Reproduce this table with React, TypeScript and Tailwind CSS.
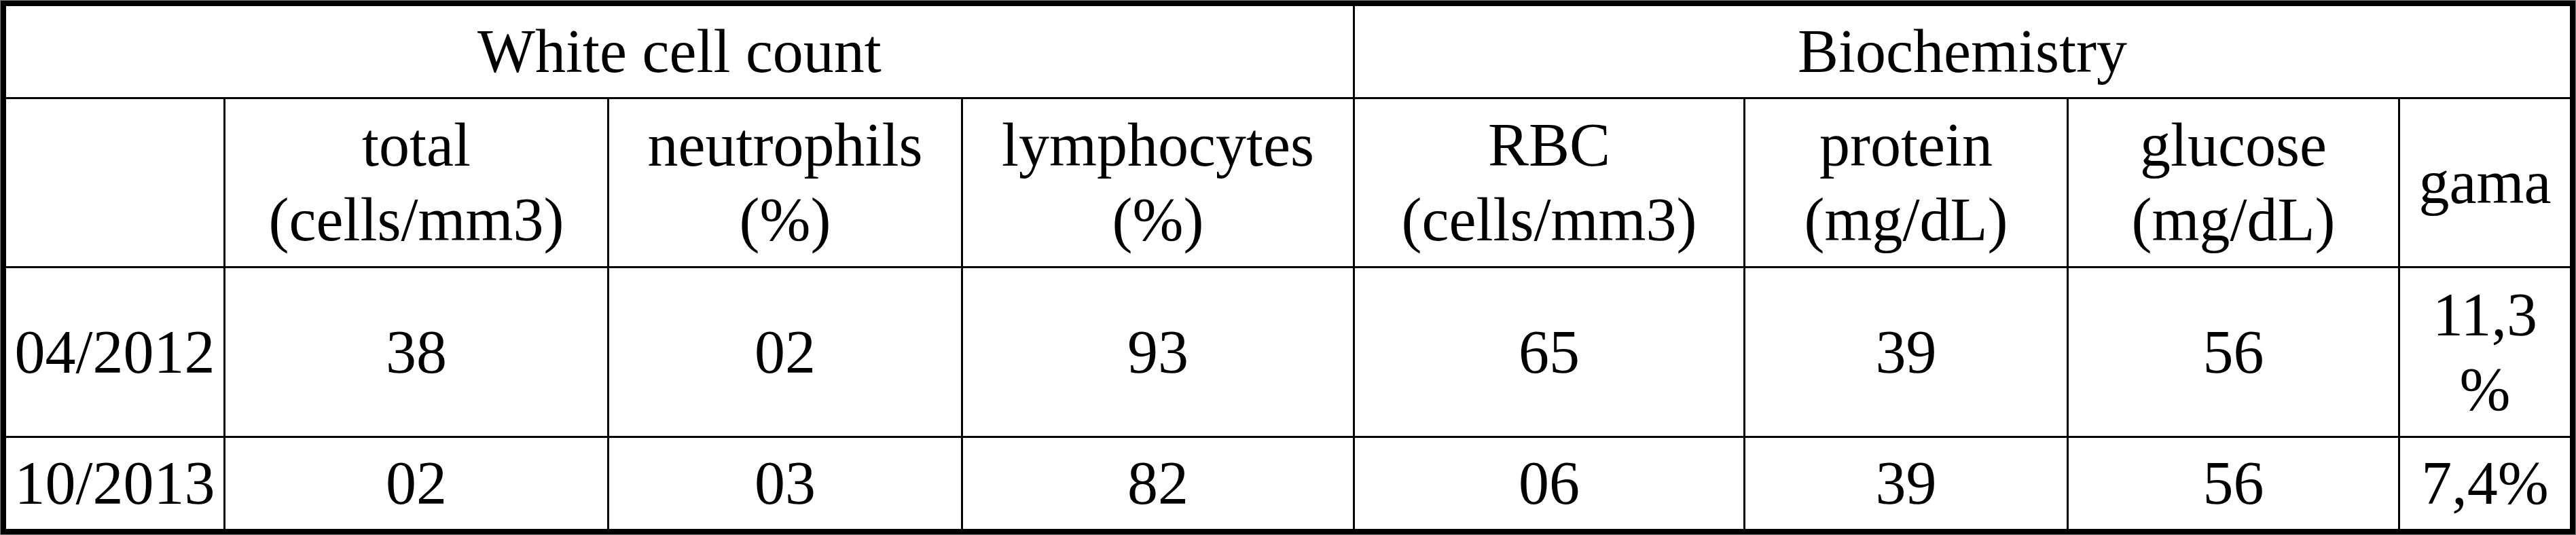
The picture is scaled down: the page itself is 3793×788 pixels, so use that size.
const cell = "flex items-center justify-center bg-white text-center";

const App = () => {
  return (
    <div className="h-[788px] w-[3793px] border border-[#7f7f7f] bg-white">
      <div
        className="h-full w-full border-[8px] border-black text-[90px] leading-[110px] text-black"
        style={{ fontFamily: '"Liberation Serif", "Times New Roman", serif' }}
      >
        <div className="grid h-full grid-cols-[320px_562px_518px_574px_572px_473px_485px_250px] grid-rows-[134px_246px_247px_134px] gap-[3px] bg-black">
          {/* group headers */}
          <div className={`${cell} col-span-4`}>White cell count</div>
          <div className={`${cell} col-span-4`}>Biochemistry</div>

          {/* column headers */}
          <div className={cell}></div>
          <div className={cell}>
            total
            <br />
            (cells/mm3)
          </div>
          <div className={cell}>
            neutrophils
            <br />
            (%)
          </div>
          <div className={cell}>
            lymphocytes
            <br />
            (%)
          </div>
          <div className={cell}>
            RBC
            <br />
            (cells/mm3)
          </div>
          <div className={cell}>
            protein
            <br />
            (mg/dL)
          </div>
          <div className={cell}>
            glucose
            <br />
            (mg/dL)
          </div>
          <div className={cell}>gama</div>

          {/* 04/2012 */}
          <div className={cell}>04/2012</div>
          <div className={cell}>38</div>
          <div className={cell}>02</div>
          <div className={cell}>93</div>
          <div className={cell}>65</div>
          <div className={cell}>39</div>
          <div className={cell}>56</div>
          <div className={cell}>
            11,3
            <br />%
          </div>

          {/* 10/2013 */}
          <div className={cell}>10/2013</div>
          <div className={cell}>02</div>
          <div className={cell}>03</div>
          <div className={cell}>82</div>
          <div className={cell}>06</div>
          <div className={cell}>39</div>
          <div className={cell}>56</div>
          <div className={cell}>7,4%</div>
        </div>
      </div>
    </div>
  );
};

export default App;
